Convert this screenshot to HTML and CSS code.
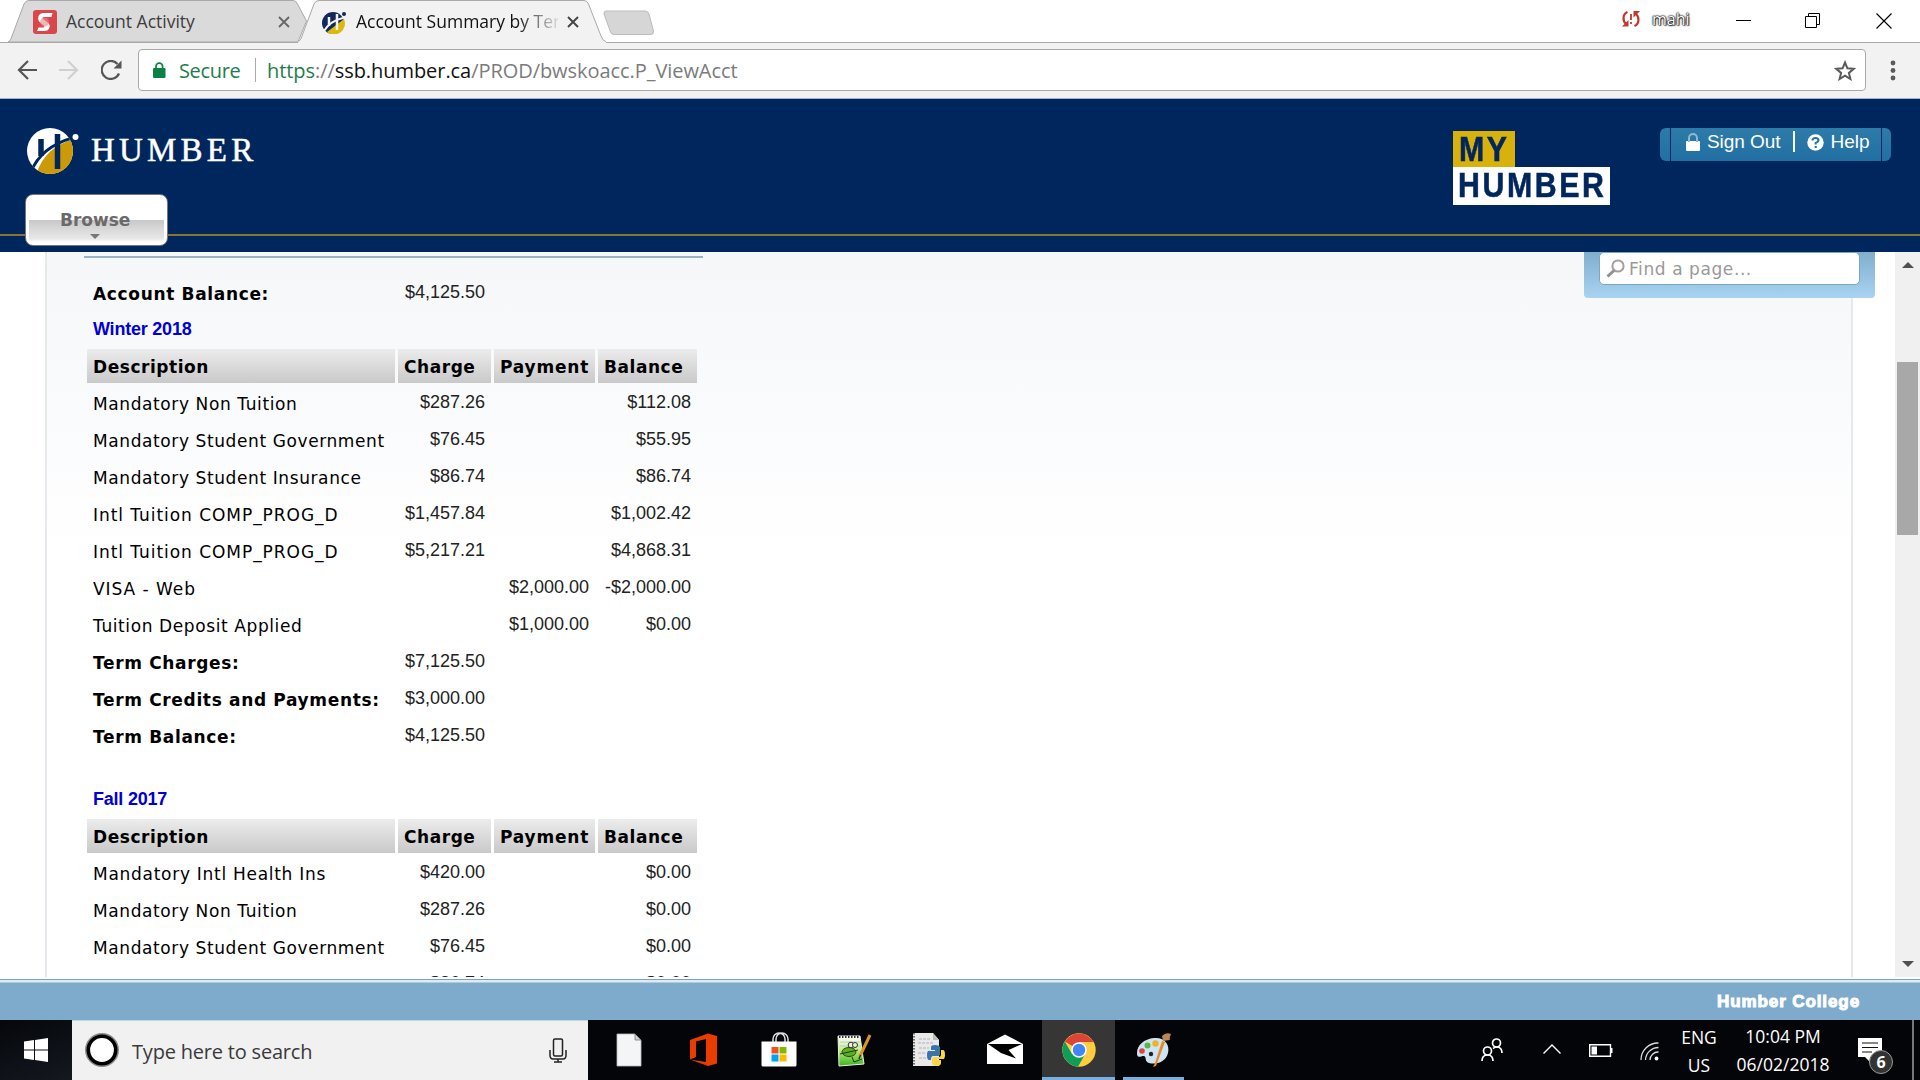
FILE: index.html
```html
<!DOCTYPE html>
<html lang="en">
<head>
<meta charset="utf-8">
<title>Account Summary by Term</title>
<link rel="stylesheet" href="styles.css">
</head>
<body>
<div class="tabstrip">
  <div class="tab tab-back">
    <svg class="tab-shape" width="302" height="42" viewBox="0 0 302 42"><path d="M1 42C3 41 4 39 5 36L17 4Q18.500 .5 22 .5H286Q289 .5 290.500 4L299.500 21L291 42Z" fill="#dadada" stroke="#a9a9a9"/></svg>
    <svg class="favicon" width="24" height="24" viewBox="0 0 24 24"><rect width="24" height="24" rx="3" fill="#d9474a"/><path d="M19.500 3L18.500 7H11Q9 7 10 9L14.500 12.500Q18 15 16 18.500Q15 21 11 21H4L5.500 17.500H10.500Q12 17 11 15.500L6 11.500Q4.500 9 5.500 6Q7 3 10.500 3Z" fill="#fff"/><circle cx="11.500" cy="12" r="4.500" fill="#e58a8a" opacity=".6"/></svg>
    <span class="tab-title">Account Activity</span>
    <svg class="tab-x" width="12" height="12" viewBox="0 0 12 12"><path d="M1 1L11 11M11 1L1 11" stroke="#666" stroke-width="1.800"/></svg>
  </div>
  <div class="tab tab-front">
    <svg class="tab-shape" width="310" height="43" viewBox="0 0 310 43"><path d="M0 43V41.500C2 41 3 39 4 36L16 4Q17.500 .5 21 .5H286Q289 .5 290.500 4L303 36Q305 41.500 308 41.500V43Z" fill="#f2f2f2"/><path d="M0 41.500C2 41 3 39 4 36L16 4Q17.500 .5 21 .5H286Q289 .5 290.500 4L303 36Q305 41.500 308 41.500" fill="none" stroke="#a9a9a9"/></svg>
    <svg class="favicon" width="24" height="24" viewBox="0 0 48 48"><circle cx="22" cy="26" r="22" fill="#12285a"/><path d="M10 44L44 18A22 22 0 0 1 10 44Z" fill="#dcb90c"/><path d="M14 14V32M30 8V40" stroke="#f2f2f2" stroke-width="5"/><path d="M4 42Q16 22 42 16" stroke="#f2f2f2" stroke-width="4" fill="none"/><circle cx="44" cy="8" r="4" fill="#12285a"/></svg>
    <span class="tab-title tab-title-fade">Account Summary by Ter</span>
    <svg class="tab-x" width="12" height="12" viewBox="0 0 12 12"><path d="M1 1L11 11M11 1L1 11" stroke="#444" stroke-width="1.900"/></svg>
  </div>
  <svg class="newtab" width="52" height="26" viewBox="0 0 52 26"><path d="M3 1H42Q45 1 46 4L50.500 21Q51 24.500 48 24.500H11Q8.500 24.500 7.500 22L1 4Q.5 1 3 1Z" fill="#d6d6d6" stroke="#bcbcbc"/></svg>
  <div class="window-tools">
    <svg width="20" height="18" viewBox="0 0 20 18"><path d="M6.500 2C1.500 4 1.500 11 5 14M13.500 16C18.500 14 18.500 7 15 4" fill="none" stroke="#c0392b" stroke-width="2.200"/><path d="M1 16.500H7.500V10ZM19 1H12.500V7.500Z" fill="#c0392b"/><path d="M10 4V10M10 12V14" stroke="#c0392b" stroke-width="1.800"/></svg>
    <span class="profile">mahi</span>
    <svg class="win-min" width="16" height="16" viewBox="0 0 16 16"><path d="M0 8.500H15" stroke="#000"/></svg>
    <svg class="win-max" width="16" height="16" viewBox="0 0 16 16"><path d="M.5 3.500H11.500V14.500H.5ZM3.500 3V.5H14.500V11.500H12" fill="none" stroke="#000"/></svg>
    <svg class="win-close" width="16" height="16" viewBox="0 0 16 16"><path d="M.5 .5L15.500 15.500M15.500 .5L.5 15.500" stroke="#000" stroke-width="1.200"/></svg>
  </div>
</div>
<div class="toolbar">
  <svg class="nav-back" width="20" height="20" viewBox="0 0 20 20"><path d="M20 10H2M11 1L2 10L11 19" fill="none" stroke="#555" stroke-width="2.200"/></svg>
  <svg class="nav-fwd" width="20" height="20" viewBox="0 0 20 20"><path d="M0 10H18M9 1L18 10L9 19" fill="none" stroke="#d0d0d0" stroke-width="2.200"/></svg>
  <svg class="nav-reload" width="21" height="20" viewBox="0 0 21 20"><path d="M18 13.500A9 9 0 1 1 16.500 4" fill="none" stroke="#555" stroke-width="2.200"/><path d="M20.500 .5V8.500H12.500Z" fill="#555"/></svg>
  <div class="omnibox">
    <svg class="lock" width="13" height="16" viewBox="0 0 13 16"><rect y="6" width="12.500" height="10" rx="1.200" fill="#0b8043"/><path d="M3 7V4.500A3.300 3.300 0 0 1 9.600 4.500V7" fill="none" stroke="#0b8043" stroke-width="1.700"/></svg>
    <span class="secure">Secure</span>
    <span class="divider"></span>
    <span class="url"><span class="url-scheme">https</span><span>://</span><span class="url-host">ssb.humber.ca</span><span>/PROD/bwskoacc.P_ViewAcct</span></span>
    <svg class="star" width="22" height="21" viewBox="0 0 22 21"><path d="M11 2.500L13.400 8.300L19.700 8.800L14.900 12.900L16.400 19L11 15.700L5.600 19L7.100 12.900L2.300 8.800L8.600 8.300Z" fill="none" stroke="#5a5a5a" stroke-width="2"/></svg>
  </div>
  <svg class="kebab" width="6" height="22" viewBox="0 0 6 22"><g fill="#5a5a5a"><circle cx="3" cy="3" r="2.400"/><circle cx="3" cy="10.500" r="2.400"/><circle cx="3" cy="18" r="2.400"/></g></svg>
</div>
<header class="site-header">
  <div class="brand">
    <svg class="brand-mark" width="52" height="47" viewBox="0 0 52 47"><defs><clipPath id="disc"><circle cx="23" cy="23" r="23"/></clipPath></defs><g clip-path="url(#disc)"><rect width="47" height="47" fill="#fff"/><path d="M9 47C15 27 29 16 47 11V47Z" fill="#cb9a06"/><path d="M4 44C11 26 27 15 47 9.500" fill="none" stroke="#00275d" stroke-width="3"/><path d="M14 11V28M30.500 6V41" stroke="#00275d" stroke-width="5.500"/><path d="M4 36L12 47H0Z" fill="#00275d"/></g><circle cx="48.500" cy="9" r="3" fill="#fff"/></svg>
    <span class="brand-name">HUMBER</span>
  </div>
  <div class="myhumber"><span class="my"><b>MY</b></span><span class="humber"><b>HUMBER</b></span></div>
  <div class="user-links">
    <svg class="ul-lock" width="14" height="18" viewBox="0 0 14 18"><rect y="8" width="14" height="10" rx="1" fill="#fff"/><path d="M3 9V5A4 4 0 0 1 11 5V9" fill="none" stroke="#8fb9d4" stroke-width="2"/></svg>
    <span class="ul-text">Sign Out</span><span class="ul-bar"></span>
    <svg class="ul-help" width="17" height="17" viewBox="0 0 17 17"><circle cx="8.500" cy="8.500" r="8.200" fill="#fff"/><path d="M5.500 6.500Q5.500 4 8.500 4T11.500 6.500Q11.500 7.800 8.700 9V10.500M8.700 12V14" fill="none" stroke="#2273a5" stroke-width="2.100"/></svg>
    <span class="ul-text">Help</span>
  </div>
  <div class="gold-line"></div>
  <div class="browse"><span>Browse</span><i class="browse-caret"></i></div>
</header>
<main class="viewport">
  <div class="sheet">
    <div class="rule"></div>
    <table class="ledger">
      <colgroup><col class="c-desc"><col class="c-charge"><col class="c-pay"><col class="c-bal"></colgroup>
      <tr><th>Account Balance:</th><td>$4,125.50</td></tr>
    </table>
    <h2 class="term">Winter 2018</h2>
    <table class="ledger">
      <colgroup><col class="c-desc"><col class="c-charge"><col class="c-pay"><col class="c-bal"></colgroup>
      <tr class="head"><th>Description</th><th>Charge</th><th>Payment</th><th>Balance</th></tr>
      <tr><td>Mandatory Non Tuition</td><td>$287.26</td><td></td><td>$112.08</td></tr>
      <tr><td>Mandatory Student Government</td><td>$76.45</td><td></td><td>$55.95</td></tr>
      <tr><td>Mandatory Student Insurance</td><td>$86.74</td><td></td><td>$86.74</td></tr>
      <tr class="caps"><td>Intl Tuition COMP_PROG_D</td><td>$1,457.84</td><td></td><td>$1,002.42</td></tr>
      <tr class="caps"><td>Intl Tuition COMP_PROG_D</td><td>$5,217.21</td><td></td><td>$4,868.31</td></tr>
      <tr class="caps"><td>VISA - Web</td><td></td><td>$2,000.00</td><td>-$2,000.00</td></tr>
      <tr><td>Tuition Deposit Applied</td><td></td><td>$1,000.00</td><td>$0.00</td></tr>
      <tr><th>Term Charges:</th><td>$7,125.50</td><td></td><td></td></tr>
      <tr><th>Term Credits and Payments:</th><td>$3,000.00</td><td></td><td></td></tr>
      <tr><th>Term Balance:</th><td>$4,125.50</td><td></td><td></td></tr>
    </table>
    <h2 class="term term-next">Fall 2017</h2>
    <table class="ledger">
      <colgroup><col class="c-desc"><col class="c-charge"><col class="c-pay"><col class="c-bal"></colgroup>
      <tr class="head"><th>Description</th><th>Charge</th><th>Payment</th><th>Balance</th></tr>
      <tr class="ins"><td>Mandatory Intl Health Ins</td><td>$420.00</td><td></td><td>$0.00</td></tr>
      <tr><td>Mandatory Non Tuition</td><td>$287.26</td><td></td><td>$0.00</td></tr>
      <tr><td>Mandatory Student Government</td><td>$76.45</td><td></td><td>$0.00</td></tr>
      <tr><td></td><td>$86.74</td><td></td><td>$0.00</td></tr>
    </table>
  </div>
  <div class="scrollbar"><i class="arrow-up"></i><div class="thumb"></div><i class="arrow-down"></i></div>
  <div class="find"><div class="find-field">
    <svg width="19" height="19" viewBox="0 0 19 19"><circle cx="12" cy="7" r="5.600" fill="none" stroke="#a0a0a0" stroke-width="2"/><path d="M8 11.500L1.500 17.500" stroke="#909090" stroke-width="3"/></svg>
    <span>Find a page...</span></div></div>
</main>
<footer class="site-footer"><span>Humber College</span></footer>
<div class="taskbar">
  <div class="start"><svg width="24" height="24" viewBox="0 0 24 24"><path d="M0 3.500L10 2V11.500H0ZM11 1.900L24 0V11.500H11ZM0 12.500H10V22L0 20.500ZM11 12.500H24V24L11 22.100Z" fill="#fff"/></svg></div>
  <div class="search">
    <svg class="cortana" width="36" height="36" viewBox="0 0 36 36"><circle cx="18" cy="18" r="15.500" fill="none" stroke="#8a8a8a" stroke-width="3"/><circle cx="18" cy="18" r="13.700" fill="#fff" stroke="#000" stroke-width="3.600"/></svg>
    <span class="search-text">Type here to search</span>
    <svg class="mic" width="18" height="25" viewBox="0 0 18 25"><g fill="none" stroke="#222" stroke-width="1.500"><rect x="4.500" y="1" width="9" height="17" rx="1.500"/><path d="M1 12V17Q1 21 4 21H14Q17 21 17 17V12M9 21V24M5 24H13"/></g></svg>
  </div>
  <div class="apps">
    <div class="app"><svg width="36" height="36" viewBox="0 0 36 36"><path d="M6 2H24L30 8V34H6Z" fill="#f4f5f7" stroke="#bbb" stroke-width=".8"/><path d="M24 2V8H30Z" fill="#cfd2d6" stroke="#777" stroke-width=".8"/></svg></div>
    <div class="app"><svg width="36" height="36" viewBox="0 0 36 36"><path d="M4 8L22 1.500L31 4V31.500L22 34L4 27.500L20 30V7L10 9.500V25L4 27.500Z" fill="#eb3c00"/></svg></div>
    <div class="app"><svg width="36" height="36" viewBox="0 0 36 36"><path d="M12 10V7A6 6 0 0 1 24 7V10M15 10V7A6 6 0 0 1 27 7V10" fill="none" stroke="#ddd" stroke-width="1.500"/><path d="M.5 9.500H35.500V33Q35.500 34.500 34 34.500H2Q.5 34.500 .5 33Z" fill="#fff"/><path d="M10.500 15H17.500V21.500H10.500Z" fill="#f25022"/><path d="M18.500 15H25.500V21.500H18.500Z" fill="#7fba00"/><path d="M10.500 22.500H17.500V29.500H10.500Z" fill="#00a4ef"/><path d="M18.500 22.500H25.500V29.500H18.500Z" fill="#ffb900"/></svg></div>
    <div class="app"><svg width="36" height="36" viewBox="0 0 36 36"><defs><linearGradient id="np" x2="0" y2="1"><stop stop-color="#fff"/><stop offset=".45" stop-color="#c9ee85"/><stop offset="1" stop-color="#36b51b"/></linearGradient></defs><path d="M2 4H24L28 32L3 34Z" fill="url(#np)" stroke="#eee"/><path d="M3 5H24" stroke="#333" stroke-width="2" stroke-dasharray="1.500 1.500"/><path d="M4 10H24M4 14H25" stroke="#b6c9d8"/><ellipse cx="13" cy="20" rx="7" ry="4.500" fill="#5fae25" stroke="#254d10"/><circle cx="15" cy="13" r="2.800" fill="#e9f3d4" stroke="#333"/><circle cx="19" cy="13" r="2.500" fill="#e9f3d4" stroke="#333"/><path d="M4 22L22 18M16 25L18 30L26 27" stroke="#1b3b10" fill="none"/><path d="M34 3L24 24" stroke="#d9942b" stroke-width="3"/><path d="M24.500 23L23 27" stroke="#333" stroke-width="1.500"/></svg></div>
    <div class="app"><svg width="36" height="36" viewBox="0 0 36 36"><path d="M2 1H22L28 8V34H2Z" fill="#e9e9e9"/><path d="M3 1V34" stroke="#444" stroke-width="1.500" stroke-dasharray="1.500 1.500"/><path d="M8 7H20M7 11H22M8 16H18M7 21H14M8 26H15" stroke="#b2b2b2" stroke-dasharray="3 1"/><path d="M22 1V8H28Z" fill="#bbb"/><path d="M20 15Q20 13 24 13T29 15V22Q29 24 26 24H22Q20 24 20 28H18Q16 28 16 23T19 19H24V18H20Z" fill="#3a75a8"/><path d="M30 18H32Q34 18 34 23T31 27H26V28H30V31Q30 34 25.500 34T21 31V27Q21 25 24 25H28Q30 25 30 22Z" fill="#ffd548"/></svg></div>
    <div class="app"><svg width="36" height="36" viewBox="0 0 36 36"><path d="M0 12L18 2.500L36 12V32H0Z" fill="#fff"/><path d="M1 12H35L21.500 18L29 26.500L14 21Z" fill="#000"/></svg></div>
    <div class="app app-on"><svg width="34" height="34" viewBox="0 0 34 34"><circle cx="17" cy="17" r="16.700" fill="#ffcd40"/><path d="M17 17L2.800 8.500A16.700 16.700 0 0 1 31.500 9H17Z" fill="#db4437"/><path d="M2.800 8.500A16.700 16.700 0 0 0 16 33.700L23.500 20.500L17 17L10 21Z" fill="#0f9d58"/><circle cx="17" cy="17" r="7.800" fill="#fff"/><circle cx="17" cy="17" r="6.200" fill="#4285f4"/></svg></div>
    <div class="app app-open"><svg width="36" height="36" viewBox="0 0 36 36"><path d="M18 6C29 5 34 13 32 21C30 30 20 33 13 31C8 29 11 25 8 24C4 24 1 27 1 21C1 13 8 7 18 6Z" fill="#cfe4f2"/><circle cx="15" cy="22" r="2.200" fill="#222"/><circle cx="6" cy="19" r="2.800" fill="#d9453f"/><circle cx="11.500" cy="13.500" r="3" fill="#5cb645"/><circle cx="19.500" cy="11.500" r="3.200" fill="#efb22b"/><path d="M29 10L20 34L17 35L19 31L26 9Z" fill="#e58a2c"/><path d="M26 4Q30 0 35 2Q33 6 34 8L27 9Z" fill="#b98654"/></svg></div>
  </div>
  <div class="tray">
    <svg class="t-people" width="22" height="24" viewBox="0 0 22 24"><g fill="none" stroke="#fff" stroke-width="1.700"><circle cx="15.500" cy="5" r="4"/><circle cx="6.500" cy="13" r="4"/><path d="M1 23Q1 17 6.500 17T12 23M12 10.500Q14 9 15.500 9Q21 9 21 15"/></g></svg>
    <svg class="t-chev" width="18" height="10" viewBox="0 0 18 10"><path d="M.5 9.500L9 1L17.500 9.500" fill="none" stroke="#fff" stroke-width="1.400"/></svg>
    <svg class="t-bat" width="24" height="13" viewBox="0 0 24 13"><path d="M.7 .7H21.500V12.300H.7Z" fill="none" stroke="#fff" stroke-width="1.400"/><path d="M22 4H23.500V9H22Z" fill="#fff"/><path d="M2.500 2.500H8V10.500H2.500Z" fill="#fff"/></svg>
    <svg class="t-wifi" width="20" height="19" viewBox="0 0 20 19"><g fill="none" stroke="#ddd" stroke-width="1.300"><path d="M1 18A17 17 0 0 1 18.500 1M5.500 18A13 13 0 0 1 18.500 5.500M10 18A8 8 0 0 1 18.500 10"/></g><circle cx="16.500" cy="16.500" r="1.900" fill="#fff"/></svg>
    <div class="t-lang"><span>ENG</span><span>US</span></div>
    <div class="t-time"><span>10:04 PM</span><span>06/02/2018</span></div>
    <div class="t-note"><svg width="24" height="24" viewBox="0 0 24 24"><path d="M0 0H24V19H12V24L7 19H0Z" fill="#fff"/><path d="M4 5H20M4 9.500H20M4 14H14" stroke="#111" stroke-width="1.200"/></svg><b class="badge">6</b></div>
    <i class="peek"></i>
  </div>
</div>
</body>
</html>
```
FILE: styles.css
```css
* { box-sizing: border-box; }
html, body { margin: 0; width: 1920px; height: 1080px; overflow: hidden; }
body { display: flex; flex-direction: column; background: #fff; font-family: "Open Sans", "Noto Sans", sans-serif; color: #000; }
svg { display: block; flex: none; }
i { font-style: normal; }

/* browser tabs */
.tabstrip { height: 43px; display: flex; background: #fff; box-shadow: inset 0 -1px #a9a9a9; }
.tab { position: relative; height: 43px; display: flex; align-items: flex-start; padding-top: 10px; }
.tab-back { width: 291px; margin-left: 7px; padding-left: 26px; }
.tab-front { width: 306px; padding-left: 24px; }
.tab-shape { position: absolute; left: 0; top: 0; }
.favicon { position: relative; }
.tab-title { position: relative; margin-left: 9px; width: 204px; line-height: 22px; font-size: 17.500px; white-space: nowrap; color: #3d3d3d; }
.tab-title-fade { margin-left: 10px; width: 202px; color: transparent; background: linear-gradient(90deg, #111 160px, rgba(17,17,17,.15) 200px); background-clip: text; -webkit-background-clip: text; }
.tab-x { position: relative; margin: 6px 0 0 8px; }
.tab-front .tab-x { margin-left: 9px; }
.newtab { margin: 10px 0 0 -1px; }
.window-tools { margin-left: auto; display: flex; padding-right: 28px; height: 42px; }
.window-tools svg { margin-top: 10px; }
.profile { margin-left: 11px; width: 38px; line-height: 38px; font-size: 16px; color: #fff; text-shadow: 0 0 1px #000, 0 0 2px #000, 0 0 2px #333, 1px 1px 1px #555; }
.window-tools .win-min { margin: 12px 0 0 46px; }
.window-tools .win-max { margin: 13px 0 0 53px; }
.window-tools .win-close { margin: 13px 0 0 55px; }

/* address bar */
.toolbar { height: 56px; display: flex; align-items: flex-start; background: #f2f2f2; border-bottom: 1px solid #9fb3cc; padding: 6px 22px 0 17px; }
.nav-back, .nav-fwd, .nav-reload { margin-top: 11px; }
.nav-fwd { margin-left: 22px; }
.nav-reload { margin-left: 22px; }
.omnibox { margin-left: 16px; width: 1728px; height: 42px; background: #fff; border: 1px solid #a9a9a9; border-radius: 4px; display: flex; align-items: center; padding-left: 14px; }
.secure { margin-left: 13px; width: 62px; font-size: 20px; line-height: 38px; padding-top: 2px; letter-spacing: -.35px; color: #1f7d4b; }
.divider { width: 1px; height: 24px; background: #aaa; margin: 0 11px 0 14px; }
.url { font-size: 20px; line-height: 38px; padding-top: 2px; letter-spacing: -.06px; color: #7b7b7b; white-space: nowrap; }
.url-scheme { color: #1f7d4b; }
.url-host { color: #111; }
.star { margin-left: auto; margin-right: 9px; }
.kebab { margin: 11px 0 0 24px; }

/* site header */
.site-header { position: relative; height: 153px; flex: none; background: #00275d; }
.brand { display: flex; padding: 29px 0 0 27px; }
.brand-name { margin: 3px 0 0 12px; font: 33px/38px "Liberation Serif", serif; letter-spacing: 4.200px; color: #fff; -webkit-text-stroke: .5px #fff; }
.myhumber { position: absolute; left: 1453px; top: 32px; display: flex; flex-direction: column; align-items: flex-start; font: bold 35px/36px "Liberation Sans", Arial, sans-serif; letter-spacing: 3px; color: #00275d; }
.myhumber span { display: block; height: 36px; }
.my { width: 62px; background: #d9b10c; padding-left: 6px; }
.humber { width: 157px; background: #fff; padding-left: 5px; }
.myhumber .humber { height: 38px; }
.myhumber b { display: inline-block; transform: scaleX(.865); transform-origin: 0 50%; -webkit-text-stroke: .6px #00275d; }
.user-links { position: absolute; left: 1660px; top: 29px; width: 231px; height: 33px; background: linear-gradient(90deg, transparent 10px, #00275d 10px 11px, transparent 11px 221px, #00275d 221px 222px, transparent 222px), linear-gradient(#2d7ba8, #2270a3); border-radius: 6px; display: flex; padding: 0 0 0 26px; color: #fff; font: 19px/28px "Liberation Sans", Arial, sans-serif; }
.ul-text { letter-spacing: -.05px; }
.ul-lock { margin: 5px 7px 0 0; }
.ul-help { margin: 6px 7px 0 0; }
.ul-bar { width: 2px; height: 21px; margin: 3px 12px 0 12px; background: #fff; }
.gold-line { position: absolute; left: 0; right: 0; top: 135px; height: 2px; background: #8a7430; }
.browse { position: absolute; left: 25px; top: 95px; width: 143px; height: 52px; border: 1px solid #777; border-radius: 8px; background: linear-gradient(#fff 0 50%, #c9c9c9 51%, #e9e9e9 88%, #fff 94%); box-shadow: inset 0 0 0 3px #fff; color: #6a6a6a; font: bold 17px/50px "DejaVu Sans", sans-serif; padding-left: 34px; }
.browse-caret { position: absolute; left: 64px; top: 39px; border: 5px solid transparent; border-top-color: #777; border-bottom: 0; }

/* page body */
.viewport { position: relative; height: 725px; flex: none; display: flex; justify-content: space-between; background: #fff; overflow: hidden; }
.sheet { width: 1808px; margin-left: 45px; height: 725px; border: solid #e6e8ec; border-width: 0 2px; background: linear-gradient(#f5f7f9, #f9fafc 130px, #fff 300px); overflow: hidden; padding: 4px 0 0 37px; }
.rule { width: 619px; height: 2px; background: #9ab2c6; margin-bottom: 15px; }
.ledger { table-layout: fixed; width: 616px; border-spacing: 3px; font: 17px "DejaVu Sans", Verdana, sans-serif; }
.c-desc { width: 308px; } .c-charge { width: 93px; } .c-pay { width: 101px; } .c-bal { width: 99px; }
.ledger th, .ledger td { height: 34px; padding: 2px 6px 0; text-align: left; line-height: 32px; letter-spacing: .6px; white-space: nowrap; }
.ledger th { letter-spacing: .66px; }
.ledger .caps td:first-child { letter-spacing: .95px; }
.ledger .ins td:first-child { letter-spacing: .72px; }
.ledger td + td, .ledger th + td { font: 18px/32px "Liberation Sans", Arial, sans-serif; text-align: right; letter-spacing: 0; padding: 0 6px 2px; color: #222; }
.ledger .head th { letter-spacing: .55px; background: linear-gradient(#ececec, #c9c9c9); }
.ledger .head th:nth-child(3) { letter-spacing: .8px; }
.term { margin: -1px 0 0 9px; height: 34px; font: bold 18px/34px "Liberation Sans", Arial, sans-serif; letter-spacing: -.22px; color: #0000d6; }
.term-next { margin-top: 26px; }
.find { position: absolute; left: 1584px; top: 0; width: 291px; height: 46px; padding: 0 15px; border-radius: 0 0 4px 4px; background: linear-gradient(#82aecd, #a8d4f2); }
.find-field { height: 33px; width: 261px; border: 1px solid #7aa7c5; border-radius: 5px; background: #fff; display: flex; align-items: center; padding-left: 6px; font: 17px "DejaVu Sans", sans-serif; color: #999; }
.find-field span { margin: 1px 0 0 4px; letter-spacing: .58px; }
.scrollbar { width: 25px; background: #f0f0f0; display: flex; flex-direction: column; align-items: center; }
.arrow-up { border: 6px solid transparent; border-bottom-color: #505050; border-top: 0; margin: 10px 0 94px; }
.thumb { width: 21px; height: 173px; background: #a8a8a8; }
.arrow-down { border: 6px solid transparent; border-top-color: #505050; border-bottom: 0; margin: auto 0 10px; }
.site-footer { height: 43px; flex: none; border-top: 2px solid #fff; background: linear-gradient(#7ba3bb 0 1px, #dfeaf3 1px 3px, #7eabcb 4px); background-clip: padding-box; padding: 0 60px 0 0; text-align: right; font: bold 17px/46px "Liberation Sans", Arial, sans-serif; color: #fff; }
.site-footer span { -webkit-text-stroke: 1px #fff; letter-spacing: .9px; }

/* taskbar */
.taskbar { height: 60px; flex: none; background: #040508; display: flex; color: #fff; }
.start { width: 72px; padding: 18px 0 0 24px; background: linear-gradient(160deg, #05070b, #14181f); }
.search { width: 516px; background: #f1f1f1; border-top: 1px solid #c9d3da; display: flex; }
.cortana { margin: 11px 0 0 12px; }
.search-text { margin-left: 12px; font-size: 20px; line-height: 62px; height: 59px; letter-spacing: -.2px; color: #3a3a3a; white-space: nowrap; }
.mic { margin: 17px 21px 0 auto; }
.apps { display: flex; margin-left: 3px; }
.app { width: 75.200px; height: 60px; padding-top: 12px; display: flex; justify-content: center; align-items: flex-start; }
.app-on { width: 73px; background: #363636; border-bottom: 3px solid #76b0e0; padding-top: 13px; }
.app-open { width: 61px; margin-left: 8px; border-bottom: 3px solid #76b0e0; }
.tray { margin-left: auto; display: flex; width: 439px; font-size: 17.500px; line-height: 28px; }
.t-people { margin-top: 18px; }
.t-chev { margin: 24px 0 0 40px; }
.t-bat { margin: 24px 0 0 28px; }
.t-wifi { margin: 22px 0 0 27px; }
.t-lang { margin: 3px 0 0 20px; width: 38px; display: flex; flex-direction: column; align-items: center; }
.t-time { margin: 2px 0 0 16px; width: 98px; display: flex; flex-direction: column; align-items: center; }
.t-note { position: relative; margin: 18px 0 0 26px; width: 24px; }
.badge { position: absolute; left: 11px; top: 12px; width: 24px; height: 24px; border-radius: 50%; background: #333; border: 1px solid #999; text-align: center; font-size: 16px; line-height: 22px; }
.peek { margin-left: 30px; width: 2px; height: 60px; background: #777; }
```
